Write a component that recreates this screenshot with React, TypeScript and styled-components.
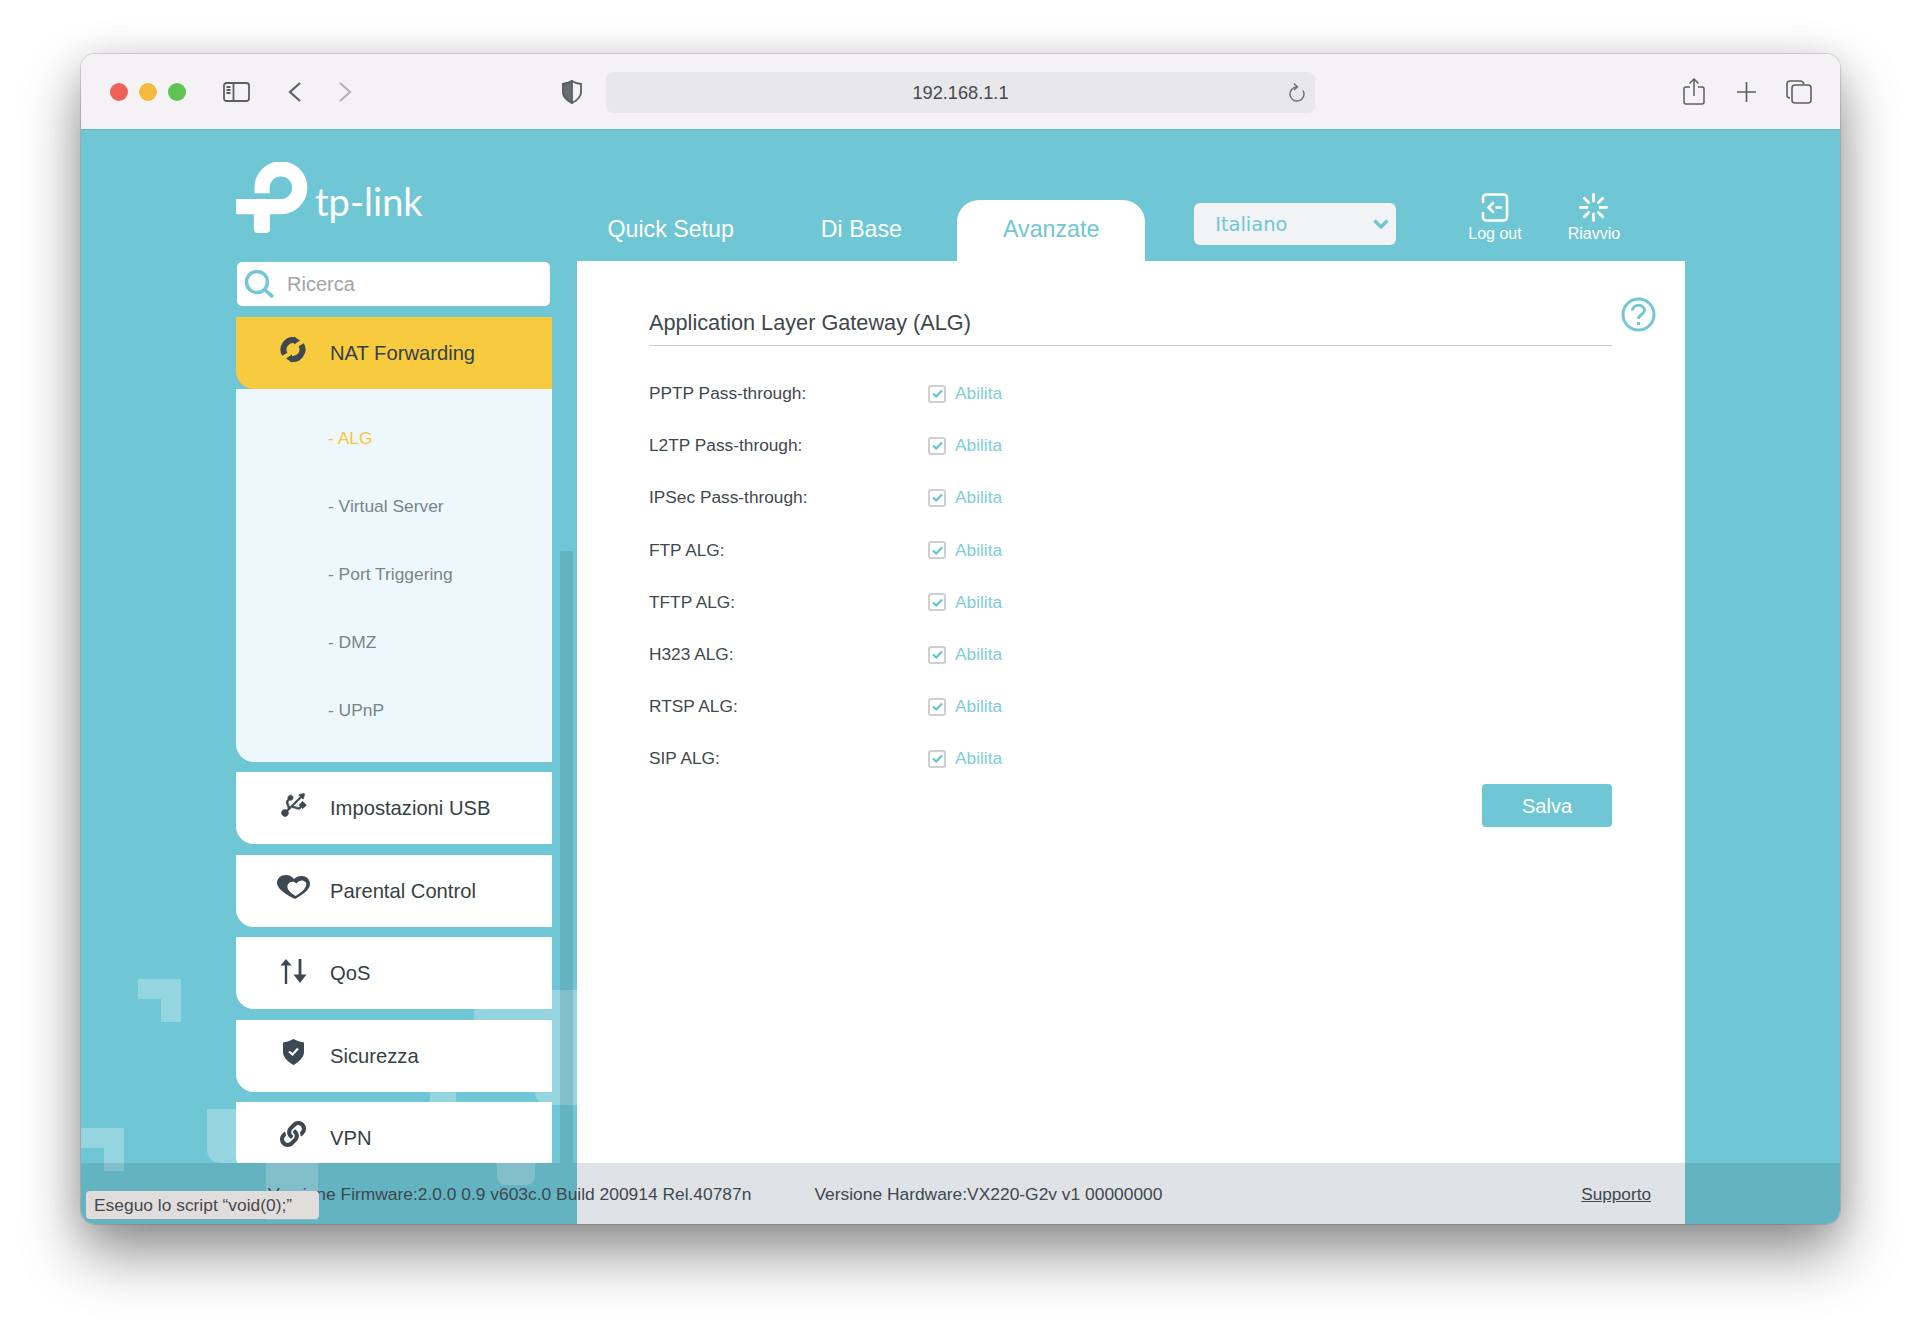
import styled, { createGlobalStyle } from 'styled-components';
import { FaLink, FaUsb } from 'react-icons/fa';

const TEAL = '#6fc7d5';
const DARK = '#3c4852';

const GlobalStyle = createGlobalStyle`
  html, body {
    margin: 0;
    padding: 0;
    background: #fff;
  }
  body {
    font-family: 'Liberation Sans', Arial, sans-serif;
    color: #3e484e;
  }
`;

const Desktop = styled.div`
  width: 1920px;
  height: 1331px;
  padding: 54px 0 0 81px;
  box-sizing: border-box;
  overflow: hidden;
`;

const Window = styled.div`
  width: 1759px;
  height: 1170px;
  border-radius: 14px;
  overflow: hidden;
  display: flex;
  flex-direction: column;
  box-shadow: 0 0 0 1px rgba(0, 0, 0, 0.12), 0 30px 60px rgba(0, 0, 0, 0.42), 0 4px 36px rgba(0, 0, 0, 0.12);
`;

const TitleBar = styled.div`
  height: 76px;
  flex: none;
  display: flex;
  align-items: center;
  padding-left: 29px;
  box-sizing: border-box;
  background: #f4f2f5;
  border-bottom: 1px solid #66b3bf;
`;

const Light = styled.span<{ $color: string }>`
  width: 18px;
  height: 18px;
  border-radius: 50%;
  margin-right: 11px;
  background: ${(props) => props.$color};
`;

const BarIcon = styled.svg<{ $left: number; $color?: string; $weight?: number }>`
  flex: none;
  margin-left: ${(props) => props.$left}px;
  fill: none;
  stroke: ${(props) => props.$color || '#5c5f63'};
  stroke-width: ${(props) => props.$weight || 1.8};
`;

const UrlBar = styled.div`
  position: relative;
  margin: 2px 0 0 24px;
  padding-top: 2px;
  box-sizing: border-box;
  width: 709px;
  height: 41px;
  border-radius: 7px;
  background: #e8e7ea;
  display: flex;
  align-items: center;
  justify-content: center;
  font-size: 18.2px;
  color: #464a4e;
`;

const ReloadIcon = styled.svg`
  position: absolute;
  right: 10px;
  top: 10px;
  fill: none;
  stroke: #6a6d70;
  stroke-width: 1.4;
`;

const Page = styled.div`
  position: relative;
  flex: 1;
  background: ${TEAL};
`;

const Decor = styled.svg`
  position: absolute;
  left: 0;
  top: 0;
  fill: rgba(255, 255, 255, 0.26);
`;

const Header = styled.header`
  position: relative;
  height: 131px;
  padding-left: 155px;
  display: flex;
  align-items: flex-end;
`;

const Logo = styled.div`
  width: 341px;
  flex: none;
  align-self: flex-start;
  margin-top: 32px;
  display: flex;
  color: #fff;
`;

const LogoWord = styled.span`
  font-family: Lato, sans-serif;
  font-size: 38px;
  line-height: 1;
  margin: 20px 0 0 7px;
`;

const Tabs = styled.nav`
  display: flex;
  align-items: flex-end;
  margin-left: -13px;
`;

const Tab = styled.a<{ $active?: boolean }>`
  height: 61px;
  line-height: 59px;
  font-size: 23.2px;
  color: ${(props) => (props.$active ? TEAL : '#fff')};
  background: ${(props) => (props.$active ? '#fff' : 'transparent')};
  padding: 0 ${(props) => (props.$active ? 46 : 43.5)}px;
  margin-left: ${(props) => (props.$active ? 11.5 : 0)}px;
  border-radius: 22px 22px 0 0;
`;

const LangSelect = styled.div`
  width: 202px;
  height: 42px;
  margin: 0 0 16px 49px;
  padding: 0 7px 0 21px;
  box-sizing: border-box;
  border-radius: 6px;
  background: #f2f3f5;
  display: flex;
  align-items: center;
  justify-content: space-between;
  font-family: 'DejaVu Sans', sans-serif;
  font-size: 19.4px;
  color: ${TEAL};
`;

const HeaderAction = styled.a<{ $left: number }>`
  margin: 0 0 17.5px ${(props) => props.$left}px;
  display: flex;
  flex-direction: column;
  align-items: center;
  gap: 2px;
  font-size: 16px;
  line-height: 20px;
  color: #fff;
`;

const Body = styled.div`
  position: relative;
  display: flex;
  align-items: flex-start;
  padding-left: 155px;
`;

const Sidebar = styled.aside`
  width: 316px;
  height: 902px;
  flex: none;
  overflow: hidden;
`;

const SearchBox = styled.div`
  width: 313px;
  height: 44px;
  margin: 1px 0 11px 1px;
  border-radius: 5px;
  background: #fff;
  display: flex;
  align-items: center;
  gap: 13px;
  padding-left: 7px;
  box-sizing: border-box;
  font-size: 20px;
  color: #a3a6a8;
`;

const Menu = styled.div`
  display: flex;
  flex-direction: column;
  gap: 10.5px;
`;

const MenuRow = styled.a<{ $active?: boolean }>`
  height: 72px;
  flex: none;
  box-sizing: border-box;
  padding: 1px 0 0 39px;
  display: flex;
  align-items: center;
  gap: 19px;
  font-size: 20.2px;
  color: #353f46;
  background: ${(props) => (props.$active ? '#f8cb3f' : '#fff')};
  border-radius: 0 0 0 18px;
`;

const MenuIcon = styled.span`
  width: 36px;
  height: 30px;
  margin-top: -9px;
  display: flex;
  align-items: center;
  justify-content: center;
  color: ${DARK};
`;

const UsbGlyph = styled(FaUsb)`
  transform: rotate(-45deg);
  stroke: currentColor;
  stroke-width: 14;
`;

const QosGlyph = styled.svg`
  margin-top: 4px;
  fill: ${DARK};
`;

const SubPanel = styled.div`
  margin-top: -10.5px;
  padding: 15px 0 17.5px 92px;
  background: #eef7fb;
  border-radius: 0 0 0 18px;
`;

const SubItem = styled.div<{ $active?: boolean }>`
  height: 68px;
  line-height: 68px;
  font-size: 17.4px;
  color: ${(props) => (props.$active ? '#f6c737' : '#77858b')};
`;

const ScrollThumb = styled.div`
  width: 13px;
  height: 612px;
  flex: none;
  margin: 290px 4px 0 8px;
  background: rgba(30, 60, 70, 0.14);
`;

const Main = styled.main`
  width: 1108px;
  height: 963px;
  flex: none;
  padding: 36px 0 0 72px;
  box-sizing: border-box;
  background: #fff;
`;

const TitleRow = styled.div`
  display: flex;
  align-items: flex-start;
  gap: 9px;
`;

const Title = styled.h1`
  width: 963px;
  margin: 12px 0 0;
  padding-top: 1px;
  height: 35px;
  font-size: 21.7px;
  font-weight: 400;
  line-height: 26px;
  color: #3e484e;
  border-bottom: 1px solid #cacccd;
`;

const Form = styled.div`
  width: 963px;
  margin-top: 21.5px;
`;

const FormRow = styled.div`
  height: 52.2px;
  display: flex;
  align-items: center;
  font-size: 17.3px;
`;

const FieldLabel = styled.span`
  width: 279px;
  color: #3e484e;
`;

const CheckBox = styled.span`
  width: 18px;
  height: 18px;
  box-sizing: border-box;
  margin-right: 9px;
  border: 2px solid #cdcfd0;
  border-radius: 3px;
  display: flex;
  align-items: center;
  justify-content: center;
`;

const CheckText = styled.span`
  color: #7fcdd9;
`;

const FormActions = styled.div`
  display: flex;
  justify-content: flex-end;
  margin-top: -1px;
`;

const SaveButton = styled.button`
  width: 130px;
  height: 43px;
  padding: 1px 0 0;
  border: 0;
  border-radius: 4px;
  background: ${TEAL};
  color: #fff;
  font-family: inherit;
  font-size: 20px;
`;

const Footer = styled.footer`
  position: absolute;
  left: 0;
  right: 0;
  bottom: 0;
  height: 61px;
  padding: 2px 189px 0 187px;
  box-sizing: border-box;
  display: flex;
  align-items: center;
  font-size: 17.4px;
  color: #3e484e;
  background: rgba(30, 60, 70, 0.14);
`;

const HardwareText = styled.span`
  margin-left: 63px;
`;

const SupportLink = styled.a`
  margin-left: auto;
  font-size: 17.2px;
  text-decoration: underline;
`;

const StatusTip = styled.div`
  position: absolute;
  left: 5px;
  bottom: 5px;
  width: 233px;
  height: 28px;
  padding-left: 8px;
  box-sizing: border-box;
  border-radius: 4px;
  background: #e1dddd;
  font-size: 17.4px;
  line-height: 28px;
  color: #45494c;
`;

const alpRows = [
  'PPTP Pass-through:',
  'L2TP Pass-through:',
  'IPSec Pass-through:',
  'FTP ALG:',
  'TFTP ALG:',
  'H323 ALG:',
  'RTSP ALG:',
  'SIP ALG:',
];

const subItems = ['- ALG', '- Virtual Server', '- Port Triggering', '- DMZ', '- UPnP'];

const LogoMark = () => (
  <svg width="72" height="71" viewBox="32 35 218 215">
    <path d="M111 130V113A57 57 0 1 1 168 170H32" fill="none" stroke="#fff" strokeWidth="46" />
    <path d="M86 150H135V238Q135 250 123 250H98Q86 250 86 238Z" fill="#fff" />
  </svg>
);

const NatIcon = () => (
  <svg width="26" height="27" viewBox="0 0 26 27" fill="none" stroke={DARK} strokeWidth="6">
    <path d="M4.8 18.25A9.5 9.5 0 0 1 15 4.2" />
    <path d="M21.2 8.75A9.5 9.5 0 0 1 11 22.8" />
    <path d="M14 .5L20 4.5L14 8.5ZM12 18.5L6 22.5L12 26.5Z" fill={DARK} stroke="none" />
  </svg>
);

const HeartIcon = () => (
  <svg width="33" height="24" viewBox="0 0 33 24" fill={DARK}>
    <path d="M9 0C13 0 15 2 17 4C19 2 21 1 25 1C30 1 33 5 33 9C33 15 25 20 18 24C10 20 0 14 0 8C0 3 4 0 9 0Z" />
    <path d="M19.5 8.5C22 5 26 4.5 28.5 7C31 10 28 15.5 18.5 21C14 18 9.5 14.5 10.5 10.5C11.5 6.5 16.5 5.5 19.5 8.5Z" fill="#fff" />
  </svg>
);

const QosIcon = () => (
  <QosGlyph width="27" height="25" viewBox="0 0 27 25">
    <path d="M6 0L11.5 6.5H7.2V25H4.8V6.5H.5Z" />
    <path d="M18.6 0H21.4V15.5H26.5L20 24L13.5 15.5H18.6Z" />
  </QosGlyph>
);

const ShieldIcon = () => (
  <svg width="21" height="26" viewBox="0 0 21 26">
    <path d="M10.5 0C14 2 17 3 21 3.4V13C21 19 15 23.5 10.5 26C6 23.5 0 19 0 13V3.4C4 3 7 2 10.5 0Z" fill={DARK} />
    <path d="M6 12.5L9.5 15.5L15 9.5" fill="none" stroke="#fff" strokeWidth="2.2" />
  </svg>
);

const LogoutIcon = () => (
  <svg width="28" height="29" viewBox="0 0 28 29" fill="none" stroke="#fff" strokeWidth="2.6" strokeLinecap="round">
    <path d="M2 9V5Q2 1.5 5.5 1.5H22Q26 1.5 26 5V24Q26 27.5 22 27.5H5.5Q2 27.5 2 24V20" />
    <path d="M12 10L7.5 14.5L12 19M15.5 14.5H20" />
  </svg>
);

const RebootIcon = () => (
  <svg width="29" height="29" viewBox="0 0 29 29" fill="none" stroke="#fff" strokeWidth="2.8" strokeLinecap="round">
    <path d="M14.5 1.5V8M14.5 21V27.5M1.5 14.5H8M21 14.5H27.5M5.3 5.3L9.6 9.6M19.4 19.4L23.7 23.7M23.7 5.3L19.4 9.6M9.6 19.4L5.3 23.7" />
  </svg>
);

export default function App() {
  return (
    <Desktop>
      <GlobalStyle />
      <Window>
        <TitleBar>
          <Light $color="#ee6259" />
          <Light $color="#f5bb40" />
          <Light $color="#5fc454" />
          <BarIcon $left={26} width="27" height="20" viewBox="0 0 27 20">
            <rect x="1" y="1" width="25" height="18" rx="2.5" />
            <path d="M10.5 1V19M3.5 5H7.5M3.5 8H7.5M3.5 11H7.5" />
          </BarIcon>
          <BarIcon $left={38} $weight={2.2} width="13" height="20" viewBox="0 0 13 20">
            <path d="M12 1L2 10L12 19" />
          </BarIcon>
          <BarIcon $left={38} $color="#b3b4b7" $weight={2.2} width="13" height="20" viewBox="0 0 13 20">
            <path d="M1 1L11 10L1 19" />
          </BarIcon>
          <BarIcon $left={210} width="20" height="24" viewBox="0 0 20 24">
            <path d="M10 1V23C6 21 1 18 1 12V4C4 4 7 3 10 1Z" fill="#6a6d70" />
            <path d="M10 1C13 3 16 4 19 4V12C19 18 14 21 10 23C6 21 1 18 1 12V4C4 4 7 3 10 1Z" />
          </BarIcon>
          <UrlBar>
            192.168.1.1
            <ReloadIcon width="16" height="20" viewBox="0 0 16 20">
              <path d="M8 5A7 7 0 1 0 14 8.5M5 1.5L8.5 5L5 8" />
            </ReloadIcon>
          </UrlBar>
          <BarIcon $left={368} $weight={1.5} width="22" height="27" viewBox="0 0 22 27">
            <path d="M7 9H3Q1 9 1 11V24Q1 26 3 26H19Q21 26 21 24V11Q21 9 19 9H15M11 1V18M6.5 5.5L11 1L15.5 5.5" />
          </BarIcon>
          <BarIcon $left={32} $weight={1.7} width="19" height="20" viewBox="0 0 19 20">
            <path d="M9.5 0V20M0 10H19" />
          </BarIcon>
          <BarIcon $left={30} $weight={1.6} width="26" height="24" viewBox="0 0 26 24">
            <path d="M4 18Q1 18 1 15V4Q1 1 4 1H14Q17 1 18 4" />
            <rect x="6" y="5" width="19" height="18" rx="3" />
          </BarIcon>
        </TitleBar>
        <Page>
          {/* pale corner shapes of the router's page background */}
          <Decor width="1759" height="1094" viewBox="81 130 1759 1094">
            <path d="M138 979H181V1022H161V999H138Z" />
            <path d="M81 1128H124V1171H104V1148H81Z" />
            <path d="M207 1109H260V1163H222Q207 1163 207 1148Z" />
            <path d="M266 1163H318V1220H266Z" />
            <path d="M474 1009H552V990H577V1105H550Q535 1105 535 1090V1030H474Z" />
            <path d="M430 1085H456V1112H430Z" />
            <path d="M497 1150H535V1175Q535 1185 525 1185H507Q497 1185 497 1175Z" />
          </Decor>
          <Header>
            <Logo>
              <LogoMark />
              <LogoWord>tp-link</LogoWord>
            </Logo>
            <Tabs>
              <Tab>Quick Setup</Tab>
              <Tab>Di Base</Tab>
              <Tab $active>Avanzate</Tab>
            </Tabs>
            <LangSelect>
              Italiano
              <svg width="16" height="10" viewBox="0 0 16 10" fill="none" stroke={TEAL} strokeWidth="3.4">
                <path d="M1.5 1.5L8 8L14.5 1.5" />
              </svg>
            </LangSelect>
            <HeaderAction $left={72}>
              <LogoutIcon />
              Log out
            </HeaderAction>
            <HeaderAction $left={46}>
              <RebootIcon />
              Riavvio
            </HeaderAction>
          </Header>
          <Body>
            <Sidebar>
              <SearchBox>
                <svg width="30" height="28" viewBox="0 0 30 28" fill="none" stroke="#74c8d5" strokeWidth="3.6">
                  <circle cx="13" cy="12" r="10.5" />
                  <path d="M21 20L29 27" />
                </svg>
                Ricerca
              </SearchBox>
              <Menu>
                <MenuRow $active>
                  <MenuIcon>
                    <NatIcon />
                  </MenuIcon>
                  NAT Forwarding
                </MenuRow>
                <SubPanel>
                  {subItems.map((item, i) => (
                    <SubItem key={item} $active={i === 0}>
                      {item}
                    </SubItem>
                  ))}
                </SubPanel>
                <MenuRow>
                  <MenuIcon>
                    <UsbGlyph size={31} />
                  </MenuIcon>
                  Impostazioni USB
                </MenuRow>
                <MenuRow>
                  <MenuIcon>
                    <HeartIcon />
                  </MenuIcon>
                  Parental Control
                </MenuRow>
                <MenuRow>
                  <MenuIcon>
                    <QosIcon />
                  </MenuIcon>
                  QoS
                </MenuRow>
                <MenuRow>
                  <MenuIcon>
                    <ShieldIcon />
                  </MenuIcon>
                  Sicurezza
                </MenuRow>
                <MenuRow>
                  <MenuIcon>
                    <FaLink size={26} />
                  </MenuIcon>
                  VPN
                </MenuRow>
              </Menu>
            </Sidebar>
            <ScrollThumb />
            <Main>
              <TitleRow>
                <Title>Application Layer Gateway (ALG)</Title>
                <svg width="35" height="35" viewBox="0 0 35 35" fill="none" stroke="#74c8d5" strokeWidth="3">
                  <circle cx="17.5" cy="17.5" r="15.5" />
                  <path d="M11.5 13.5C11.5 6.5 23.5 6.5 23.5 13.5C23.5 17.5 17.5 17.5 17.5 22" />
                  <path d="M17.5 25V28" />
                </svg>
              </TitleRow>
              <Form>
                {alpRows.map((label) => (
                  <FormRow key={label}>
                    <FieldLabel>{label}</FieldLabel>
                    <CheckBox>
                      <svg width="11" height="9" viewBox="0 0 11 9" fill="none" stroke="#62c3d2" strokeWidth="2.2">
                        <path d="M1 4.5L4.2 7.5L10 1.5" />
                      </svg>
                    </CheckBox>
                    <CheckText>Abilita</CheckText>
                  </FormRow>
                ))}
                <FormActions>
                  <SaveButton>Salva</SaveButton>
                </FormActions>
              </Form>
            </Main>
          </Body>
          <Footer>
            <span>Versione Firmware:2.0.0 0.9 v603c.0 Build 200914 Rel.40787n</span>
            <HardwareText>Versione Hardware:VX220-G2v v1 00000000</HardwareText>
            <SupportLink>Supporto</SupportLink>
          </Footer>
          <StatusTip>Eseguo lo script “void(0);”</StatusTip>
        </Page>
      </Window>
    </Desktop>
  );
}
